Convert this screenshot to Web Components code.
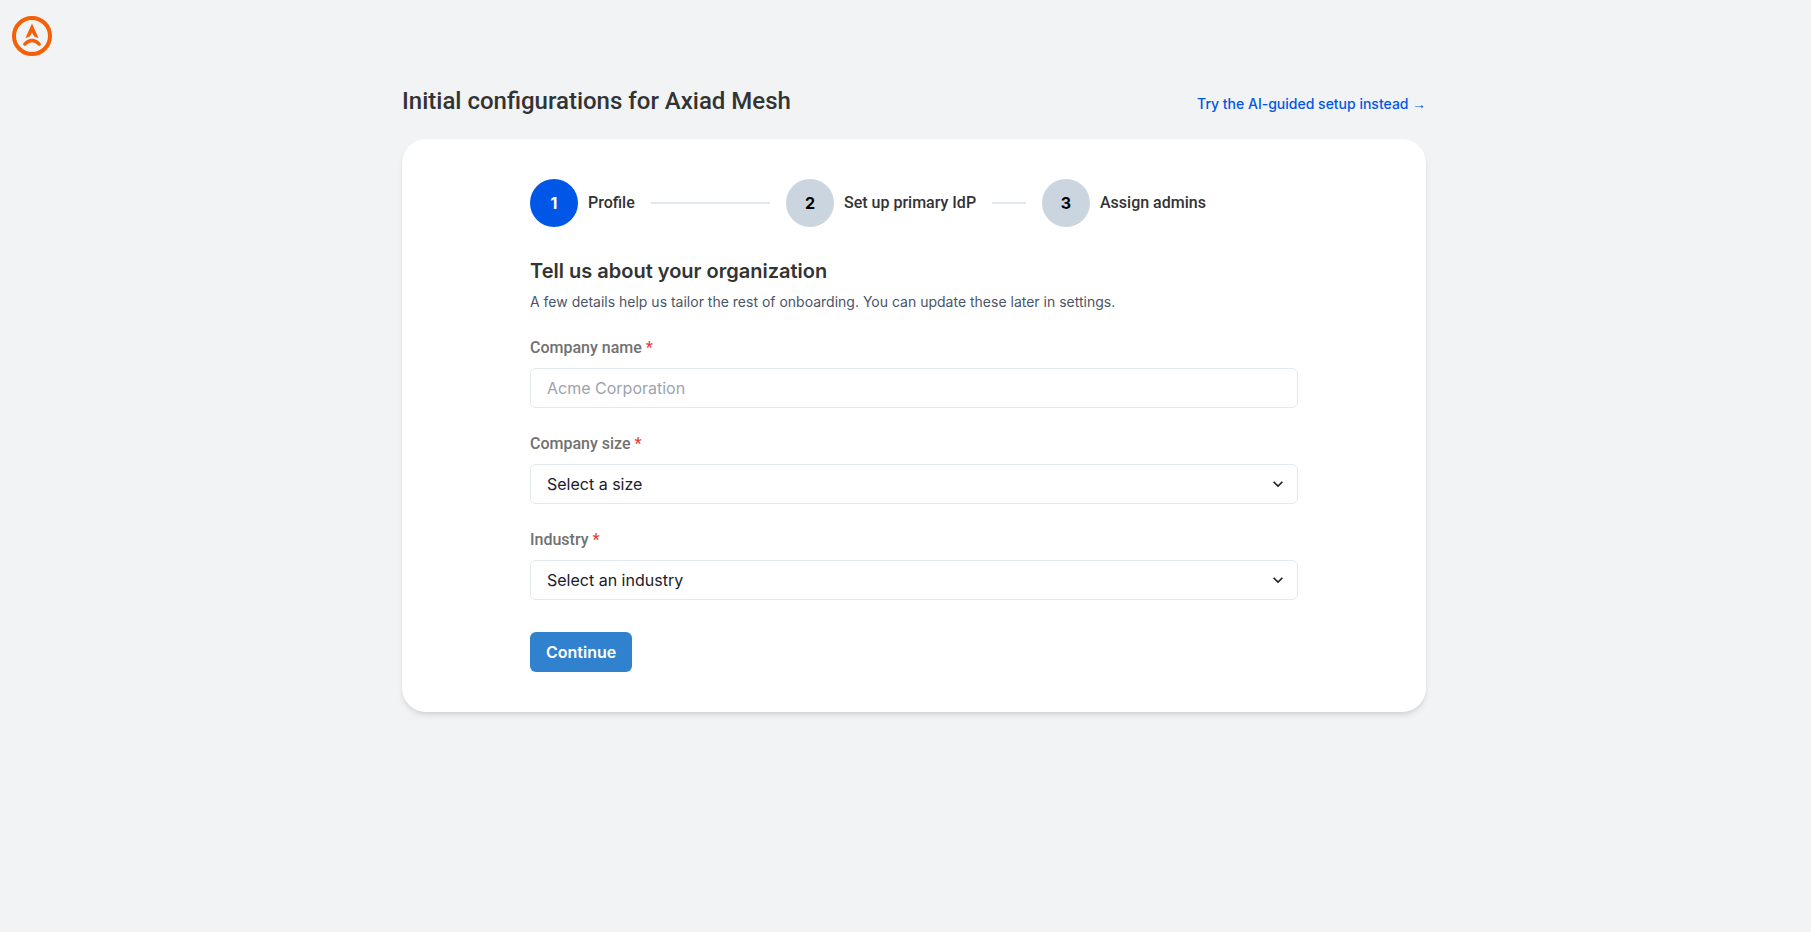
<!DOCTYPE html>
<html lang="en">
<head>
<meta charset="utf-8">
<meta name="viewport" content="width=device-width, initial-scale=1">
<title>Axiad Mesh</title>
<style>
  body {
    --label-font: Roboto, "Liberation Sans", sans-serif;
    margin: 0;
    min-height: 100vh;
    background: #f1f3f5;
    color: #333;
    font-family: Inter, Roboto, sans-serif;
    font-size: 16px;
    line-height: 24px;
  }
</style>
</head>
<body>
<app-shell>
  <brand-logo slot="rail"></brand-logo>
  <page-header>
    Initial configurations for Axiad Mesh
    <nav-link slot="action" href="#ai-setup">Try the AI-guided setup instead</nav-link>
  </page-header>
  <setup-card>
    <step-list>
      <step-item number="1" active>Profile</step-item>
      <step-item number="2">Set up primary IdP</step-item>
      <step-item number="3" last>Assign admins</step-item>
    </step-list>
    <profile-form></profile-form>
  </setup-card>
</app-shell>

<script>
class AppShell extends HTMLElement {
  connectedCallback() {
    this.attachShadow({ mode: 'open' });
    this.shadowRoot.innerHTML = `
      <style>
        :host {
          display: flex;
          min-height: 100vh;
        }
        aside {
          flex: none;
          width: 64px;
          box-sizing: border-box;
          padding: 16px 12px;
        }
        main {
          flex: 1;
          min-width: 0;
          padding: 87px 47px 48px 0;
        }
        .content {
          max-width: 1024px;
          margin: 0 auto;
        }
      </style>
      <aside><slot name="rail"></slot></aside>
      <main><div class="content"><slot></slot></div></main>
    `;
  }
}
customElements.define('app-shell', AppShell);

class BrandLogo extends HTMLElement {
  connectedCallback() {
    this.attachShadow({ mode: 'open' });
    this.shadowRoot.innerHTML = `
      <style>
        :host { display: block; }
        svg { display: block; }
      </style>
      <svg width="40" height="40" viewBox="0 0 40 40" role="img" aria-label="Axiad">
        <circle cx="20" cy="20" r="18" fill="none" stroke="#f55f06" stroke-width="4"/>
        <path d="M20 7.600 L26.600 22.300 Q24.400 21.200 22.200 20.600 L20 16.400 L17.800 20.600 Q15.600 21.200 13.400 22.300 Z" fill="#f55f06"/>
        <path d="M12.800 28.100 Q20 20.900 27.200 28.100" fill="none" stroke="#f55f06" stroke-width="3.400" stroke-linecap="round"/>
      </svg>
    `;
  }
}
customElements.define('brand-logo', BrandLogo);

class PageHeader extends HTMLElement {
  connectedCallback() {
    this.attachShadow({ mode: 'open' });
    this.shadowRoot.innerHTML = `
      <style>
        :host {
          display: flex;
          align-items: flex-end;
          justify-content: space-between;
          gap: 16px;
          margin-bottom: 24px;
        }
        h1 {
          margin: 0;
          font-family: var(--label-font);
          font-size: 24px;
          font-weight: 500;
          line-height: 28px;
        }
      </style>
      <h1><slot></slot></h1>
      <slot name="action"></slot>
    `;
  }
}
customElements.define('page-header', PageHeader);

class NavLink extends HTMLElement {
  connectedCallback() {
    this.attachShadow({ mode: 'open' });
    this.shadowRoot.innerHTML = `
      <style>
        :host {
          display: block;
          font-size: 14px;
          font-weight: 500;
          line-height: 21px;
        }
        a { color: #0057e7; text-decoration: none; }
        a:hover { text-decoration: underline; }
        .arrow { font-family: var(--label-font); }
      </style>
      <a href="${this.getAttribute('href')}"><slot></slot><span class="arrow"> →</span></a>
    `;
  }
}
customElements.define('nav-link', NavLink);

class SetupCard extends HTMLElement {
  connectedCallback() {
    this.attachShadow({ mode: 'open' });
    this.shadowRoot.innerHTML = `
      <style>
        :host {
          display: block;
          padding: 40px;
          border-radius: 24px;
          background: #fff;
          box-shadow: 0 4px 6px -1px rgba(0, 0, 0, 0.1), 0 2px 4px -1px rgba(0, 0, 0, 0.06);
        }
        .inner {
          max-width: 768px;
          margin: 0 auto;
        }
      </style>
      <div class="inner"><slot></slot></div>
    `;
  }
}
customElements.define('setup-card', SetupCard);

class StepList extends HTMLElement {
  connectedCallback() {
    this.attachShadow({ mode: 'open' });
    this.shadowRoot.innerHTML = `
      <style>
        :host {
          display: grid;
          grid-template-columns: repeat(3, 1fr);
          margin-bottom: 32px;
        }
      </style>
      <slot></slot>
    `;
  }
}
customElements.define('step-list', StepList);

class StepItem extends HTMLElement {
  connectedCallback() {
    this.attachShadow({ mode: 'open' });
    this.shadowRoot.innerHTML = `
      <style>
        :host {
          display: flex;
          align-items: center;
          font-family: var(--label-font);
          font-weight: 500;
        }
        .number {
          display: flex;
          flex: none;
          align-items: center;
          justify-content: center;
          width: 48px;
          height: 48px;
          margin-right: 10px;
          border-radius: 50%;
          background: #cbd5e0;
          color: #000;
          font-family: Inter, sans-serif;
          font-weight: 700;
        }
        :host([active]) .number { background: #0057e7; color: #fff; }
        .label { white-space: nowrap; }
        .line {
          flex: 1;
          height: 2px;
          margin: 0 16px;
          background: #e2e8f0;
        }
        :host([last]) .line { display: none; }
      </style>
      <span class="number">${this.getAttribute('number')}</span>
      <span class="label"><slot></slot></span>
      <span class="line"></span>
    `;
  }
}
customElements.define('step-item', StepItem);

// Text box, or a drop-down when the "select" attribute is present
class FormField extends HTMLElement {
  connectedCallback() {
    const placeholder = this.getAttribute('placeholder');
    const options = (this.getAttribute('options') || '').split('|').filter(Boolean);
    const control = this.hasAttribute('select')
      ? `<select id="control" required>
          <option value="">${placeholder}</option>
          ${options.map((o) => `<option>${o}</option>`).join('')}
        </select>
        <svg class="chevron" width="20" height="20" viewBox="0 0 24 24" aria-hidden="true">
          <path d="M16.590 8.590 L12 13.170 L7.410 8.590 L6 10 L12 16 L18 10 Z" fill="currentColor"/>
        </svg>`
      : `<input id="control" type="text" placeholder="${placeholder}" required>`;

    this.attachShadow({ mode: 'open' });
    this.shadowRoot.innerHTML = `
      <style>
        :host { display: block; }
        label {
          display: block;
          margin-bottom: 8px;
          color: #717171;
          font-family: var(--label-font);
          font-weight: 500;
        }
        .required { color: #e53e3e; }
        .control {
          display: grid;
          align-items: center;
          color: #1a202c;
        }
        input, select, .chevron { grid-area: 1 / 1; }
        input, select {
          appearance: none;
          box-sizing: border-box;
          width: 100%;
          height: 40px;
          margin: 0;
          padding: 0 16px;
          border: 1px solid #e2e8f0;
          border-radius: 6px;
          background: #fff;
          color: inherit;
          font: inherit;
          outline: none;
        }
        input:focus, select:focus { border-color: #3182ce; }
        input::placeholder { color: #9ca3af; opacity: 1; }
        .chevron {
          justify-self: end;
          margin-right: 10px;
          pointer-events: none;
        }
      </style>
      <label for="control">${this.getAttribute('label')} <span class="required">*</span></label>
      <div class="control">${control}</div>
    `;
  }
}
customElements.define('form-field', FormField);

class ProfileForm extends HTMLElement {
  connectedCallback() {
    this.attachShadow({ mode: 'open' });
    this.shadowRoot.innerHTML = `
      <style>
        :host { display: block; }
        h2 {
          margin: 0 0 8px;
          font-size: 20px;
          font-weight: 600;
          line-height: 24px;
        }
        p {
          margin: 0 0 24px;
          color: #4a5568;
          font-size: 14px;
          line-height: 21px;
        }
        form {
          display: flex;
          flex-direction: column;
          gap: 24px;
        }
        button {
          align-self: flex-start;
          height: 40px;
          margin: 8px 0 0;
          padding: 0 16px;
          border: 0;
          border-radius: 6px;
          background: #3182ce;
          color: #fff;
          font: inherit;
          font-weight: 600;
          cursor: pointer;
        }
        button:hover { background: #2b6cb0; }
      </style>
      <h2>Tell us about your organization</h2>
      <p>A few details help us tailor the rest of onboarding. You can update these later in settings.</p>
      <form>
        <form-field label="Company name" placeholder="Acme Corporation"></form-field>
        <form-field select label="Company size" placeholder="Select a size"
          options="1-50|51-200|201-1000|1001-5000|5000+"></form-field>
        <form-field select label="Industry" placeholder="Select an industry"
          options="Education|Finance|Government|Healthcare|Technology"></form-field>
        <button type="button">Continue</button>
      </form>
    `;
  }
}
customElements.define('profile-form', ProfileForm);
</script>
</body>
</html>
